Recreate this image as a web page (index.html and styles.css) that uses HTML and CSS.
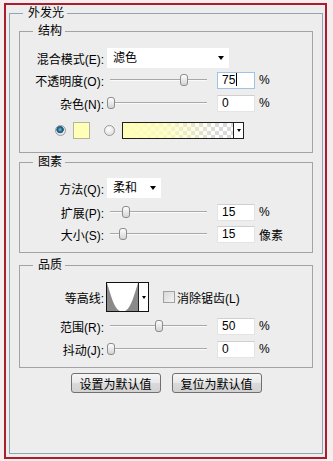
FILE: index.html
```html
<!DOCTYPE html>
<html>
<head>
    <title>外发光</title>
    <link rel="stylesheet" href="styles.css">
</head>
<body>
<div class="frame">
    <fieldset class="outer">
        <legend>外发光</legend>

        <fieldset class="group structure">
            <legend>结构</legend>
            <div class="row row-select">
                <label class="lbl">混合模式(E):</label>
                <div class="select blend">滤色<span class="arrow"></span></div>
            </div>
            <div class="row gap3">
                <label class="lbl">不透明度(O):</label>
                <div class="slider"><span class="thumb" style="left: 73px"></span></div>
                <span class="field focus">75<i class="caret"></i></span>
                <span class="unit">%</span>
            </div>
            <div class="row gap5">
                <label class="lbl">杂色(N):</label>
                <div class="slider"><span class="thumb" style="left: 0px"></span></div>
                <span class="field">0</span>
                <span class="unit">%</span>
            </div>
            <div class="row color-row">
                <span class="radio checked"></span>
                <span class="swatch"></span>
                <span class="radio"></span>
                <span class="gradient"><span class="gradient-fill"></span><span class="drop"><span class="arrow"></span></span></span>
            </div>
        </fieldset>

        <fieldset class="group elements">
            <legend>图素</legend>
            <div class="row row-select">
                <label class="lbl">方法(Q):</label>
                <div class="select method">柔和<span class="arrow"></span></div>
            </div>
            <div class="row gap5">
                <label class="lbl">扩展(P):</label>
                <div class="slider"><span class="thumb" style="left: 15px"></span></div>
                <span class="field">15</span>
                <span class="unit">%</span>
            </div>
            <div class="row gap4">
                <label class="lbl">大小(S):</label>
                <div class="slider"><span class="thumb" style="left: 12px"></span></div>
                <span class="field">15</span>
                <span class="unit">像素</span>
            </div>
        </fieldset>

        <fieldset class="group quality">
            <legend>品质</legend>
            <div class="row row-contour">
                <label class="lbl">等高线:</label>
                <div class="contour">
                    <svg width="31" height="28" viewBox="0 0 31 28">
                        <rect width="31" height="28" fill="#8a8a8a"/>
                        <path d="M0 0 H31 C28 9 24 26 18 28 H13 C7 26 3 9 0 0 Z" fill="#fff"/>
                    </svg>
                    <span class="drop"><span class="arrow"></span></span>
                </div>
                <span class="checkbox"></span>
                <span class="check-label">消除锯齿(L)</span>
            </div>
            <div class="row gap5">
                <label class="lbl">范围(R):</label>
                <div class="slider"><span class="thumb" style="left: 48px"></span></div>
                <span class="field">50</span>
                <span class="unit">%</span>
            </div>
            <div class="row gap5">
                <label class="lbl">抖动(J):</label>
                <div class="slider"><span class="thumb" style="left: 0px"></span></div>
                <span class="field">0</span>
                <span class="unit">%</span>
            </div>
        </fieldset>

        <div class="buttons">
            <button type="button">设置为默认值</button>
            <button type="button">复位为默认值</button>
        </div>
    </fieldset>
</div>
</body>
</html>
```

FILE: styles.css
```css
body {
    margin: 0;
    background: #f6eeee;
    font-family: "Liberation Sans", "Noto Sans CJK SC", sans-serif;
    font-size: 12px;
    color: #000;
}

.frame {
    box-sizing: border-box;
    width: 323px;
    height: 456px;
    margin: 3px 0 0 4px;
    border: 2px solid #a81e2c;
    background: #ededed;
    display: flex;
    flex-direction: column;
}

fieldset {
    margin: 0;
    min-width: 0;
}

legend {
    line-height: 14px;
    height: 14px;
}

.outer {
    flex: 1;
    margin: 1px 2px 3px 3px;
    padding: 4px 9px 0 9px;
    border: 1px solid #92a4b2;
}

.outer > legend {
    margin-left: 4px;
    padding: 0 3px 0 5px;
}

.group {
    padding: 0;
    border: 1px solid #a3a3a3;
}

.group > legend {
    margin-left: 13px;
    padding: 0 3px 0 5px;
}

.structure {
    padding-top: 10px;
    padding-bottom: 13px;
}

.elements {
    margin-top: 2px;
    padding-top: 9px;
    padding-bottom: 9px;
}

.quality {
    margin-top: 5px;
    padding-top: 10px;
    padding-bottom: 9px;
}

.row {
    display: flex;
    align-items: center;
    height: 18px;
}

.gap3 { margin-top: 3px; }
.gap4 { margin-top: 4px; }
.gap5 { margin-top: 5px; }

.row-select {
    height: 20px;
}

.lbl {
    width: 84px;
    margin-right: 3px;
    text-align: right;
    white-space: nowrap;
}

.select {
    position: relative;
    box-sizing: border-box;
    height: 20px;
    line-height: 20px;
    padding-left: 6px;
    background: #fff;
}

.blend {
    width: 122px;
}

.method {
    width: 54px;
}

.arrow {
    display: inline-block;
    width: 0;
    height: 0;
    border-top: 4px solid #000;
    border-left: 3px solid transparent;
    border-right: 3px solid transparent;
}

.select .arrow {
    position: absolute;
    right: 5px;
    top: 8px;
}

.slider {
    position: relative;
    width: 103px;
    height: 18px;
    margin-right: 7px;
}

.slider::before {
    content: "";
    position: absolute;
    left: 3px;
    width: 97px;
    top: 8px;
    height: 0;
    border-top: 1px solid #a8a8a8;
    border-bottom: 1px solid #fafafa;
}

.thumb {
    position: absolute;
    top: 3px;
    box-sizing: border-box;
    width: 8px;
    height: 12px;
    border: 1px solid #8c8c8c;
    border-radius: 3px;
    background: linear-gradient(#fdfdfd, #d4d4d4);
}

.field {
    box-sizing: border-box;
    width: 38px;
    height: 17px;
    line-height: 15px;
    padding-left: 4px;
    background: #fff;
    border: 1px solid #e4e4e4;
    border-top-color: #cfcfcf;
}

.field.focus {
    border-color: #9ec3e6;
}

.caret {
    display: inline-block;
    width: 1px;
    height: 13px;
    background: #000;
    vertical-align: -2px;
    margin-left: 1px;
}

.unit {
    margin-left: 4px;
}

.color-row {
    margin-top: 10px;
    height: 17px;
    padding-left: 35px;
}

.radio {
    box-sizing: border-box;
    width: 11px;
    height: 11px;
    border-radius: 50%;
    border: 1px solid #9a9a9a;
    background: radial-gradient(circle at 40% 35%, #ffffff, #d6d6d6);
}

.radio.checked {
    background: radial-gradient(circle at 45% 40%, #7ec0dc 0, #1d5d80 2.5px, #2a6f90 3.5px, #e8e8e8 4px);
}

.swatch {
    box-sizing: border-box;
    width: 17px;
    height: 17px;
    margin: 0 14px 0 7px;
    border: 1px solid #b4b4a0;
    background: #ffffb8;
}

.gradient {
    display: flex;
    box-sizing: border-box;
    width: 122px;
    height: 17px;
    margin-left: 7px;
    border: 1px solid #1e1e1e;
}

.gradient-fill {
    flex: 1;
    background:
        linear-gradient(to right, #ffffb8 0%, rgba(255, 255, 184, 0.75) 40%, rgba(255, 255, 184, 0) 85%),
        repeating-conic-gradient(#dadada 0 25%, #ffffff 0 50%) 0 0 / 8px 8px;
}

.drop {
    display: flex;
    align-items: center;
    justify-content: center;
    width: 9px;
    border-left: 1px solid #1e1e1e;
    background: #fff;
}

.drop .arrow {
    border-top-width: 3px;
    border-left-width: 2px;
    border-right-width: 2px;
}

.row-contour {
    height: 30px;
}

.contour {
    display: flex;
    box-sizing: border-box;
    height: 30px;
    margin-left: -1px;
    border: 1px solid #111;
}

.contour svg {
    display: block;
}

.checkbox {
    box-sizing: border-box;
    width: 12px;
    height: 12px;
    margin-left: 14px;
    border: 1px solid #a0a0a0;
    background: linear-gradient(135deg, #d8d8d8, #f4f4f4);
}

.check-label {
    margin-left: 2px;
}

.buttons {
    display: flex;
    justify-content: center;
    gap: 11px;
    margin-top: 5px;
}

button {
    box-sizing: border-box;
    width: 90px;
    height: 20px;
    padding: 0;
    font: inherit;
    color: #000;
    border: 1px solid #707070;
    border-radius: 3px;
    background: linear-gradient(#f6f6f6 0%, #e8e8e8 50%, #dadada 51%, #d2d2d2 100%);
}
```
